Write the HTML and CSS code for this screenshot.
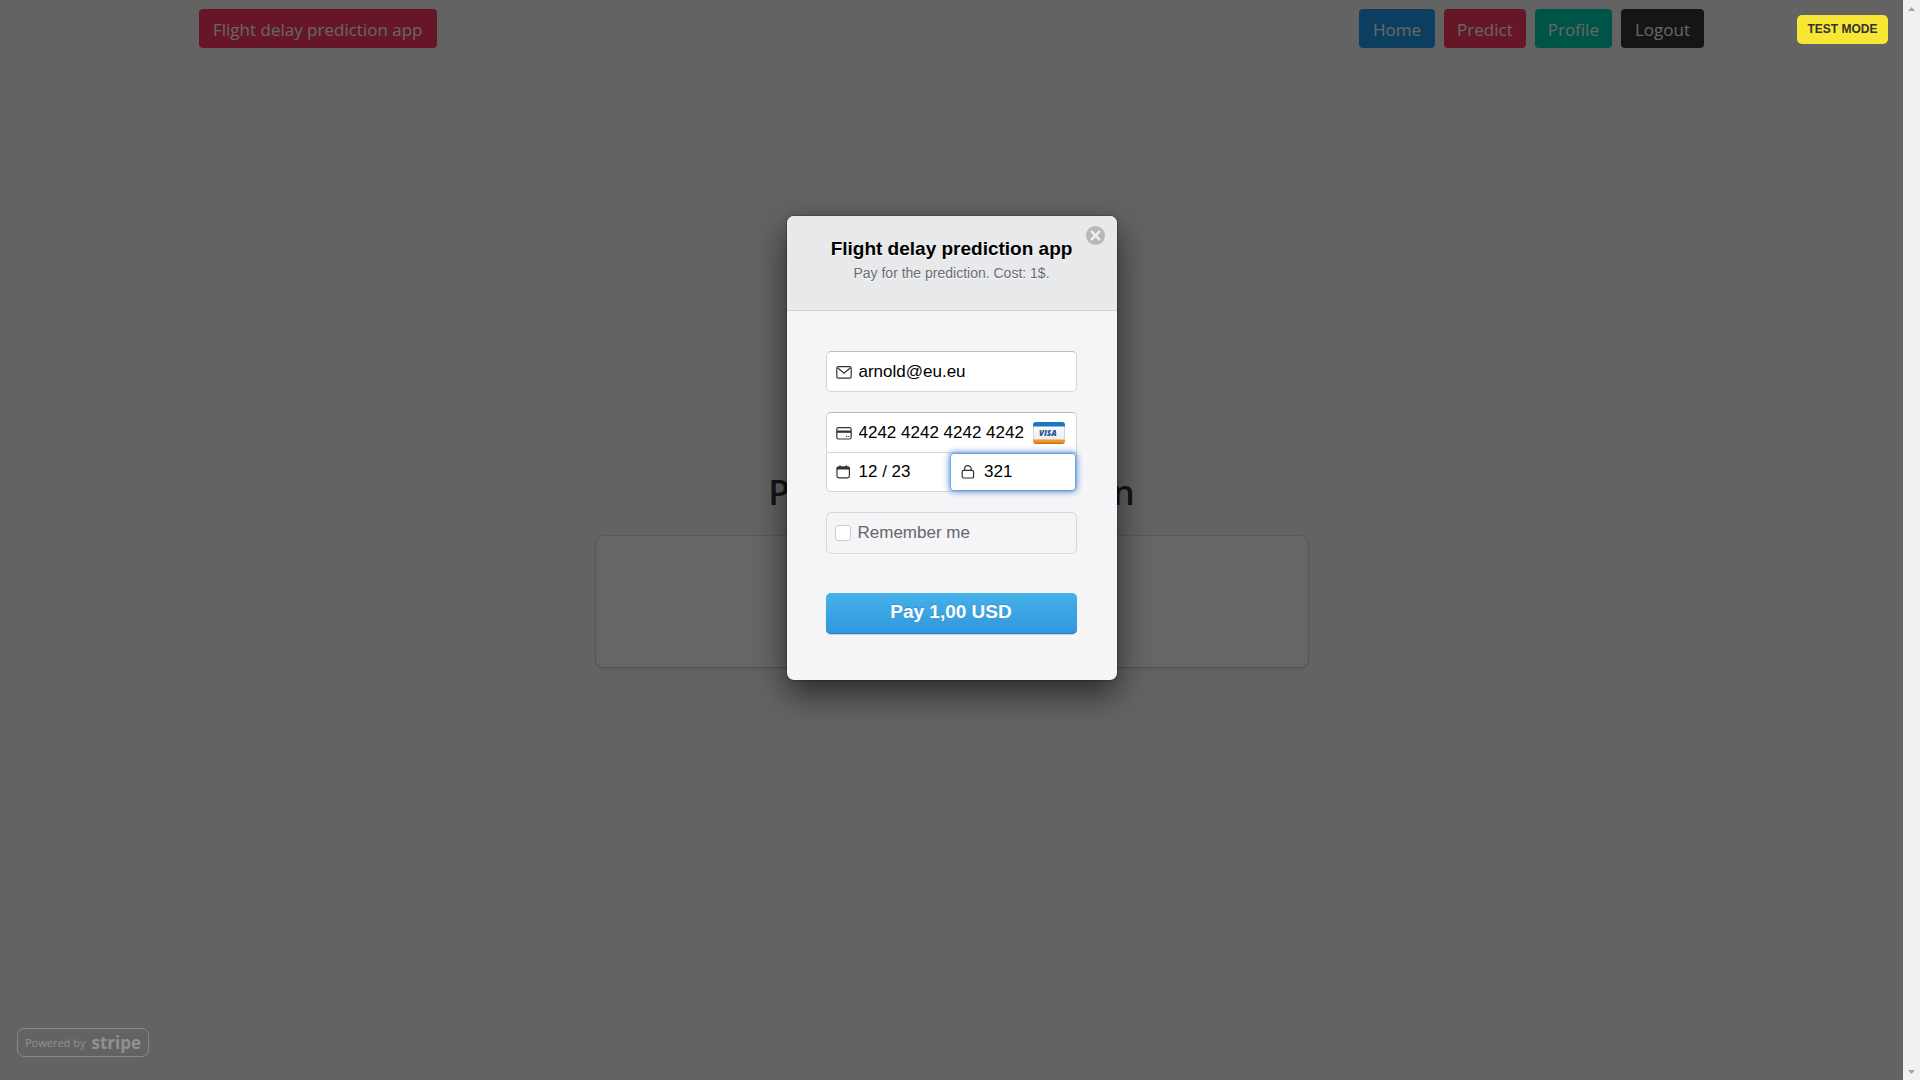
FILE: index.html
```html
<!DOCTYPE html>
<html lang="en">
<head>
<meta charset="utf-8">
<title>Flight delay prediction app</title>
<link rel="stylesheet" href="styles.css">
</head>
<body>
<div class="app">
  <header class="navbar">
    <a class="button danger" href="#">Flight delay prediction app</a>
    <nav class="menu">
      <a class="button info" href="#">Home</a>
      <a class="button danger" href="#">Predict</a>
      <a class="button primary" href="#">Profile</a>
      <a class="button dark" href="#">Logout</a>
    </nav>
  </header>
  <main class="hero">
    <h1 class="title">Pay for the prediction</h1>
    <section class="box"></section>
  </main>

  <div class="overlay">
    <span class="test-mode">TEST MODE</span>
    <form class="checkout">
      <div class="checkout-header">
        <button class="close" type="button" aria-label="Close">
          <svg width="19" height="19" viewBox="0 0 19 19"><circle cx="9.5" cy="9.5" r="9.5" fill="#b7b8ba"/><path d="M5.7 5.7l7.6 7.6M13.3 5.7l-7.6 7.6" stroke="#f1f1f3" stroke-width="2.4" stroke-linecap="round"/></svg>
        </button>
        <h2 class="merchant">Flight delay prediction app</h2>
        <p class="description">Pay for the prediction. Cost: 1$.</p>
      </div>
      <div class="checkout-body">
        <label class="field single">
          <svg class="icon" width="16" height="16" viewBox="0 0 16 16" fill="none" stroke="#333" stroke-width="1.2"><rect x=".8" y="2.6" width="14.4" height="11.600" rx="1.6"/><path d="M1.800 4L8 9.200 14.200 4"/></svg>
          <input type="email" value="arnold@eu.eu" aria-label="Email">
        </label>
        <div class="card-group">
          <label class="field number">
            <svg class="icon" width="16" height="16" viewBox="0 0 16 16"><rect x=".8" y="2.6" width="14.4" height="11.4" rx="1.8" fill="none" stroke="#333" stroke-width="1.2"/><path d="M1 5.500h14v2.300H1z" fill="#333"/><path d="M10 11.5h1.2M12.2 11.5h1.2" stroke="#333" stroke-width="1.2"/></svg>
            <input type="text" value="4242 4242 4242 4242" aria-label="Card number">
            <svg class="visa" width="32" height="22" viewBox="0 0 32 22">
              <defs><linearGradient id="paper" x2="0" y2="1"><stop offset="0" stop-color="#fff"/><stop offset="1" stop-color="#e6e8ee"/></linearGradient></defs>
              <rect x=".5" y=".5" width="31" height="21" rx="2.5" fill="url(#paper)" stroke="#d5d7dc"/>
              <path d="M0 4.500V3a3 3 0 0 1 3-3h26a3 3 0 0 1 3 3v1.500z" fill="#1b74c5"/>
              <path d="M0 17.500h32V19a3 3 0 0 1-3 3H3a3 3 0 0 1-3-3z" fill="#f0992a"/>
              <path d="M.5 20.500h31L29 22H3z" fill="#cf6f12"/>
              <text class="visa-text" x="6" y="14">VISA</text>
              <path d="M7 8h2l.8 2.500z" fill="#f0992a"/>
            </svg>
          </label>
          <div class="card-row">
            <label class="field">
              <svg class="icon" width="16" height="16" viewBox="0 0 16 16"><rect x="1" y="3" width="12.400" height="10.800" rx="1.8" fill="none" stroke="#333" stroke-width="1.2"/><path d="M.6 5.500V4q0-1.600 1.600-1.600h10Q13.800 2.400 13.800 4v1.500z" fill="#333"/><path d="M4 1.200v1.600M10.400 1.200v1.600" stroke="#333" stroke-width="1.2"/></svg>
              <input type="text" value="12 / 23" aria-label="Expiry">
            </label>
            <label class="field focused">
              <svg class="icon" width="16" height="16" viewBox="0 0 16 16" fill="none" stroke="#333" stroke-width="1.2"><rect x="1.200" y="6.400" width="11.400" height="7.600" rx="1.600"/><path d="M3.600 6.400V5a3.300 3.300 0 0 1 6.600 0v1.400"/></svg>
              <input type="text" value="321" aria-label="CVC">
            </label>
          </div>
        </div>
        <label class="remember"><input type="checkbox">Remember me</label>
        <button class="pay" type="button">Pay 1,00 USD</button>
      </div>
    </form>
    <a class="powered" href="#">Powered by <strong class="wordmark">stripe</strong></a>
  </div>
</div>
<div class="scrollbar" aria-hidden="true">
  <svg width="17" height="17" viewBox="0 0 17 17"><path d="M5 11h7L8.500 7z" fill="#a3a3a3"/></svg>
  <svg width="17" height="17" viewBox="0 0 17 17"><path d="M5 7h7l-3.500 4z" fill="#a3a3a3"/></svg>
</div>
</body>
</html>
```
FILE: styles.css
```css
* { box-sizing: border-box; }
body {
  margin: 0;
  min-height: 100vh;
  display: flex;
  font-family: "Open Sans", "Noto Sans", sans-serif;
  background: #f8f8f8;
}
.app {
  position: relative;
  flex: 1;
  display: flex;
  flex-direction: column;
}
.scrollbar {
  width: 17px;
  display: flex;
  flex-direction: column;
  justify-content: space-between;
  background: #f1f1f1;
}
.scrollbar svg { display: block; }

/* page */
.navbar {
  display: flex;
  justify-content: space-between;
  padding: 9px 199px 0;
}
.menu { display: flex; gap: 9px; }
.button {
  height: 39px;
  padding: 0 14px;
  border-radius: 4px;
  color: #fff;
  font-size: 17px;
  line-height: 41px;
  text-decoration: none;
}
.menu .button { padding: 0 13px; }
.danger { background: #ff3860; }
.info { background: #209cee; }
.primary { background: #00d1b2; }
.dark { background: #363636; }
.menu .info, .menu .dark { padding: 0 14px; }
.hero {
  flex: 1;
  display: flex;
  flex-direction: column;
  align-items: center;
  justify-content: center;
  padding-top: 10px;
}
.title {
  margin: 0 0 24px;
  color: #363636;
  font-size: 35px;
  font-weight: 600;
  line-height: 40px;
}
.box {
  width: 712px;
  max-width: 90%;
  height: 131px;
  border-radius: 7px;
  background: #fff;
  box-shadow: 0 2px 3px rgba(10, 10, 10, .1), 0 0 0 1px rgba(10, 10, 10, .1);
}

/* checkout overlay */
.overlay {
  position: absolute;
  inset: 0;
  display: flex;
  flex-direction: column;
  align-items: center;
  justify-content: space-between;
  padding: 20vh 17px 23px;
  background: rgba(0, 0, 0, .6);
  font-family: "Liberation Sans", Arial, sans-serif;
}
.test-mode {
  position: absolute;
  top: 15px;
  right: 15px;
  width: 91px;
  border-radius: 5px;
  background: #f7e633;
  color: #333;
  font-size: 12px;
  font-weight: 700;
  line-height: 29px;
  text-align: center;
}
.checkout {
  width: 330px;
  border-radius: 7px;
  background: #f5f5f7;
  box-shadow: 0 13px 33px rgba(0, 0, 0, .6), 0 0 2px rgba(0, 0, 0, .6);
}
.checkout-header {
  position: relative;
  height: 95px;
  padding-top: 20px;
  border-bottom: 1px solid #cfd0d2;
  border-radius: 7px 7px 0 0;
  background: #e8e9eb;
  text-align: center;
  text-shadow: 0 1px 0 #fff;
}
.close {
  position: absolute;
  top: 10px;
  right: 12px;
  padding: 0;
  border: 0;
  background: none;
}
.close svg { display: block; }
.merchant {
  margin: 0;
  color: #000;
  font-size: 19px;
  font-weight: 700;
  line-height: 25px;
}
.description {
  margin: 0;
  color: #6b6b76;
  font-size: 14px;
  line-height: 25px;
}
.checkout-body {
  display: flex;
  flex-direction: column;
  gap: 20px;
  padding: 40px 40px 46px 39px;
}
.field {
  flex: 1;
  display: flex;
  align-items: center;
  gap: 7px;
  min-width: 0;
  height: 39px;
  padding: 0 11px 0 9px;
  background: #fff;
}
.field input {
  flex: 1;
  min-width: 0;
  padding: 0;
  border: 0;
  outline: 0;
  background: none;
  color: #000;
  font: 17px "Liberation Sans", Arial, sans-serif;
}
.icon, .visa { flex: none; }
.visa-text {
  fill: #1a4fa0;
  font: italic 800 8px "Open Sans", sans-serif;
}
.single {
  flex: none;
  height: 41px;
}
.single, .card-group {
  border: 1px solid #d5d5d8;
  border-top-color: #bcbcbf;
  border-radius: 5px;
}
.number { border-radius: 5px 5px 0 0; }
.card-row {
  display: flex;
  border-top: 1px solid #d5d5d8;
}
.card-row .field {
  height: 38px;
  border-radius: 0 0 5px 5px;
}
.card-row .focused {
  padding-left: 11px;
  border-radius: 4px;
  box-shadow: inset 0 0 0 1px #6fa3e0, 0 0 6px 1px #5f97e0;
}
.remember {
  display: flex;
  align-items: center;
  gap: 7px;
  height: 42px;
  padding-left: 8px;
  border: 1px solid #d7d7da;
  border-radius: 5px;
  box-shadow: 0 1px 0 #fff;
  color: #66666e;
  font-size: 17px;
}
.remember input {
  appearance: none;
  width: 16px;
  height: 16px;
  margin: 0;
  border: 1px solid #ccccd0;
  border-radius: 3px;
  background: #fff;
}
.pay {
  height: 41px;
  margin-top: 19px;
  padding: 0 0 4px;
  border: 0;
  border-radius: 5px;
  background: linear-gradient(#45b1e8, #3097de);
  box-shadow: inset 0 -1px 0 #2a7cc4, 0 1px 1px rgba(0, 0, 0, .15);
  color: #fff;
  font: 700 19px "Liberation Sans", Arial, sans-serif;
  text-shadow: 0 -1px 0 rgba(46, 86, 153, .3);
}
.powered {
  align-self: flex-start;
  display: flex;
  align-items: center;
  justify-content: center;
  gap: 6px;
  width: 132px;
  height: 29px;
  border: 1px solid #888;
  border-radius: 7px;
  color: #919191;
  font: 11px "Open Sans", sans-serif;
  text-decoration: none;
}
.wordmark {
  font-size: 17px;
  line-height: 20px;
}
```
